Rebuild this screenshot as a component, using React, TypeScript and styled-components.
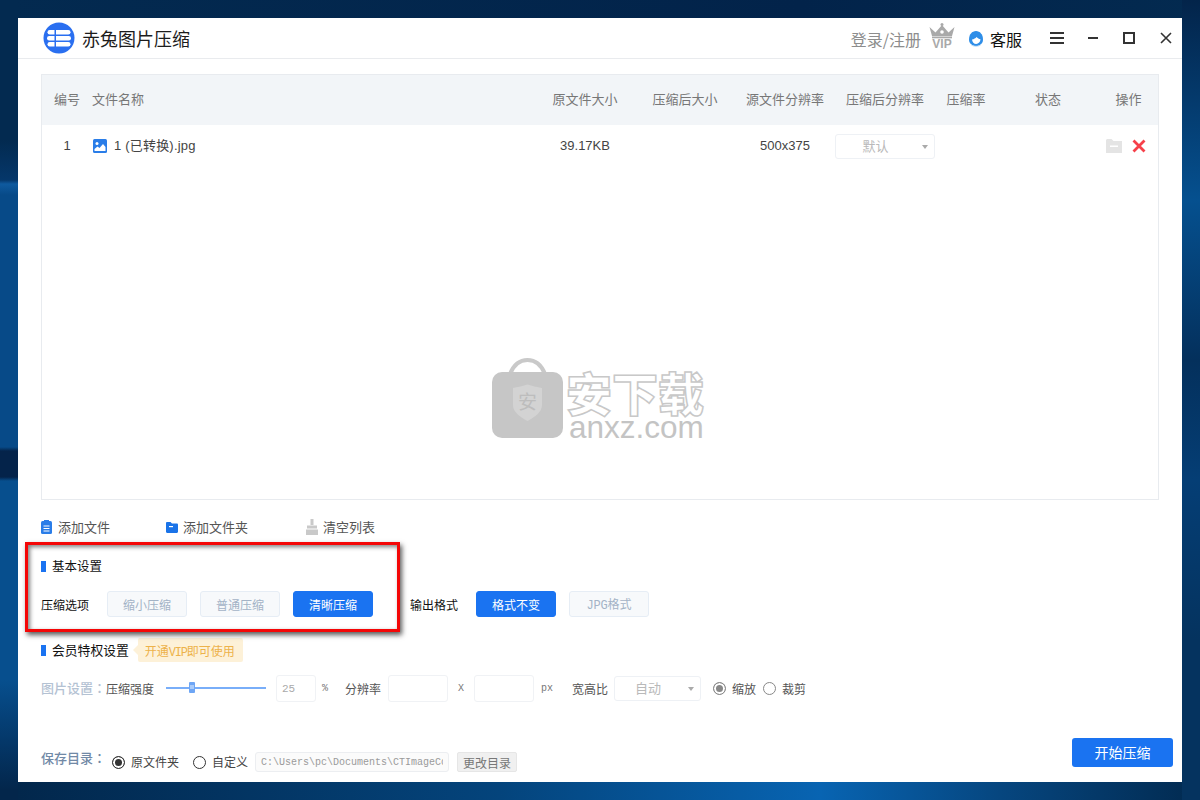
import React from 'react';
import styled, { createGlobalStyle } from 'styled-components';

const CJK = `"Noto Sans CJK SC", "Liberation Sans", sans-serif`;
const LATIN = `"Liberation Sans", "Noto Sans CJK SC", sans-serif`;
const MONO = `"Liberation Mono", "Noto Sans CJK SC", monospace`;
const BLUE = '#1a73f1';

const GlobalStyle = createGlobalStyle`
  html, body {
    margin: 0;
    height: 800px;
    overflow: hidden;
  }
  body {
    font-family: ${CJK};
    background-color: #03264b;
    background-repeat: no-repeat;
    background-size: 18px 100%, 18px 100%, 100% 18px, 100% 100%;
    background-position: left top, right top, left bottom, left top;
    background-image:
      linear-gradient(180deg, #032a50 0, #032a50 140px, #05376a 180px, #0f5a9f 184px, #074a88 195px, #074a88 447px, #04234a 451px, #04234a 477px, #074f8e 481px, #074f8e 680px, #04386a 740px, #03264b 790px),
      linear-gradient(180deg, #03244a 0, #05508f 200px, #04305c 360px, #053e75 480px, #05335f 640px, #05335f 800px),
      linear-gradient(90deg, #02264a 0, #04447c 500px, #0864b2 820px, #06467f 1000px, #022a50 1200px),
      linear-gradient(90deg, #032a50 0, #02234a 800px, #032a50 1200px);
  }
  * {
    box-sizing: border-box;
  }
`;

const Page = styled.div`
  padding: 18px;
  height: 800px;
`;

const Window = styled.div`
  position: relative;
  height: 764px;
  background: #fff;
  display: flex;
  flex-direction: column;
`;

const Header = styled.header`
  height: 41px;
  flex: none;
  display: flex;
  align-items: center;
  border-bottom: 1px solid #e9ebee;
  padding: 0 8px 0 25px;
`;

const Title = styled.h1`
  margin: 0 0 0 7px;
  font-size: 18px;
  line-height: 24px;
  font-weight: 400;
  color: #1c1c1c;
`;

const HeaderRight = styled.div`
  margin-left: auto;
  display: flex;
  align-items: center;
`;

const Login = styled.span`
  font-size: 16px;
  line-height: 22px;
  color: #8d8d8d;
  margin: 1px 8px 0 0;
`;

const Service = styled.span`
  font-size: 16px;
  line-height: 22px;
  color: #111;
  margin: 1px 27px 0 6px;
`;

const WinButton = styled.span<{ $gap: number }>`
  display: flex;
  width: 16px;
  height: 16px;
  margin-left: ${(p) => p.$gap}px;
`;

const Crown = styled.svg`
  margin-bottom: 2px;
`;

const Content = styled.main`
  flex: 1;
  padding: 15px 23px 0;
  display: flex;
  flex-direction: column;
`;

const TableBox = styled.section`
  position: relative;
  height: 426px;
  flex: none;
  border: 1px solid #e8ebef;
`;

const TableRow = styled.div<{ $head?: boolean }>`
  display: grid;
  grid-template-columns: 50px 443px 100px 100px 100px 100px 62px 102px 1fr;
  align-items: center;
  height: ${(p) => (p.$head ? 50 : 42)}px;
  padding-bottom: ${(p) => (p.$head ? 2 : 0)}px;
  background: ${(p) => (p.$head ? '#f2f5f8' : '#fff')};
  color: ${(p) => (p.$head ? '#777' : '#444')};
  font-size: 13px;
  line-height: 18px;
  font-family: ${(p) => (p.$head ? CJK : LATIN)};
`;

const Cell = styled.div<{ $left?: boolean }>`
  display: flex;
  align-items: center;
  justify-content: ${(p) => (p.$left ? 'flex-start' : 'center')};
  gap: 7px;
`;

const FileIcon = styled.svg`
  margin-left: 1px;
`;

const FileName = styled.span`
  letter-spacing: 0.2px;
`;

const SelectBox = styled.div<{ $width: number }>`
  position: relative;
  width: ${(p) => p.$width}px;
  height: 25px;
  border: 1px solid #eef1f5;
  border-radius: 3px;
  font-family: ${CJK};
  font-size: 13px;
  line-height: 21px;
  color: #b9b9b9;
  padding-right: 19px;
  text-align: center;
  flex: none;
`;

const Caret = styled.i`
  position: absolute;
  right: 6px;
  top: 10px;
  border: 3px solid transparent;
  border-top: 4px solid #aaa;
  border-bottom: 0;
`;

const RowActions = styled.div`
  display: flex;
  align-items: center;
  gap: 10px;
  margin-left: 7px;
`;

const Watermark = styled.div`
  position: absolute;
  left: 450px;
  top: 283px;
  display: flex;
  gap: 3px;
`;

const WatermarkText = styled.div`
  display: flex;
  flex-direction: column;
`;

const WatermarkCn = styled.span`
  font-size: 46px;
  line-height: 46px;
  font-weight: 900;
  margin-top: 10px;
  color: #fff;
  -webkit-text-stroke: 1.5px #c8c8c8;
`;

const WatermarkEn = styled.span`
  font-family: ${LATIN};
  font-size: 31.5px;
  line-height: 26px;
  margin-left: 3px;
  color: #c4c4c4;
`;

const Toolbar = styled.div`
  margin-top: 18px;
  height: 20px;
  display: flex;
  align-items: center;
`;

const ToolItem = styled.span<{ $width: number }>`
  width: ${(p) => p.$width}px;
  display: flex;
  align-items: center;
  font-size: 13px;
  line-height: 18px;
  margin-bottom: 2px;
  color: #555;
`;

const ToolIcon = styled.span`
  width: 17px;
  display: flex;
`;

const SectionHead = styled.div<{ $top: number }>`
  margin-top: ${(p) => p.$top}px;
  display: flex;
  align-items: center;
  font-size: 12.5px;
  line-height: 20px;
  color: #111;
`;

const BlueMark = styled.i`
  width: 5px;
  height: 11px;
  flex: none;
  background: ${BLUE};
  margin-right: 6px;
`;

const OptionRow = styled.div`
  margin-top: 15px;
  display: flex;
  align-items: center;
`;

const OptionLabel = styled.span<{ $gap?: number }>`
  font-size: 12px;
  line-height: 18px;
  color: #111;
  margin-left: ${(p) => p.$gap ?? 0}px;
  margin-right: 18px;
  padding-top: 2px;
`;

const OptionButton = styled.button<{ $active?: boolean }>`
  width: 80px;
  height: 26px;
  margin: 0 13px 0 0;
  padding: 0;
  border-radius: 3px;
  border: 1px solid ${(p) => (p.$active ? BLUE : '#e6edf5')};
  background: ${(p) => (p.$active ? BLUE : '#f7f9fb')};
  color: ${(p) => (p.$active ? '#fff' : '#a3b3c6')};
  font-family: ${CJK};
  font-size: 12px;
`;

const Latin = styled.span<{ $tight: number }>`
  font-family: ${MONO};
  font-size: 12px;
  letter-spacing: ${(p) => p.$tight}px;
`;

const VipTag = styled.span`
  position: relative;
  margin-left: 9px;
  height: 24px;
  width: 105px;
  padding-left: 7px;
  background: #fdf1d8;
  border-radius: 2px;
  color: #edb24a;
  font-size: 12px;
  line-height: 25px;
  &::before {
    content: '';
    position: absolute;
    left: -5px;
    top: 7px;
    border: 5px solid transparent;
    border-left: 0;
    border-right-color: #fdf1d8;
  }
`;

const VipHead = styled(SectionHead)`
  font-size: 12.8px;
`;

const ImageRow = styled.div`
  margin-top: 13px;
  height: 27px;
  display: flex;
  align-items: center;
  font-size: 12px;
  line-height: 18px;
  color: #555;
`;

const GroupLabel = styled.span<{ $dark?: boolean }>`
  font-family: "Noto Sans CJK JP", sans-serif;
  font-size: 13px;
  line-height: 18px;
  width: 65px;
  flex: none;
  margin-top: ${(p) => (p.$dark ? -8 : -2)}px;
  font-weight: 500;
  color: ${(p) => (p.$dark ? '#7189a6' : '#b4c2d3')};
`;

const Slider = styled.div`
  position: relative;
  width: 100px;
  height: 2px;
  margin: 0 10px 2px 12px;
  background: #79aef9;
`;

const SliderThumb = styled.i`
  position: absolute;
  left: 23px;
  top: -5px;
  width: 6px;
  height: 11px;
  border-radius: 1px;
  background: #6ea6f5;
  &::after {
    content: '';
    position: absolute;
    left: 1px;
    top: 3px;
    width: 4px;
    height: 4px;
    background: #a9cbfa;
  }
`;

const Field = styled.input<{ $width: number }>`
  width: ${(p) => p.$width}px;
  height: 27px;
  flex: none;
  border: 1px solid #f0f2f5;
  border-radius: 3px;
  background: #fff;
  padding: 0 5px;
  outline: none;
  font-family: ${MONO};
  font-size: 11px;
  color: #aaa;
`;

const Unit = styled.span<{ $left: number; $right: number }>`
  font-family: ${MONO};
  font-size: 10px;
  color: #777;
  margin: 0 ${(p) => p.$right}px 0 ${(p) => p.$left}px;
`;

const Plain = styled.span<{ $left?: number; $right?: number }>`
  margin: 0 ${(p) => p.$right ?? 0}px 0 ${(p) => p.$left ?? 0}px;
  white-space: nowrap;
`;

const Radio = styled.i<{ $on?: boolean; $color: string }>`
  width: 13px;
  height: 13px;
  flex: none;
  border-radius: 50%;
  border: 1px solid ${(p) => p.$color};
  background: ${(p) => (p.$on ? p.$color : 'transparent')};
  box-shadow: ${(p) => (p.$on ? 'inset 0 0 0 2px #fff' : 'none')};
`;

const Footer = styled.footer`
  margin: 36px -14px 0 0;
  display: flex;
  justify-content: space-between;
  align-items: flex-start;
`;

const SaveRow = styled.div`
  margin-top: 14px;
  height: 20px;
  display: flex;
  align-items: center;
  font-size: 12px;
  line-height: 18px;
  color: #444;
`;

const PathField = styled(Field)`
  height: 20px;
  border-color: #eceef1;
  background: #fbfbfb;
  font-size: 10px;
  padding: 0 5px;
  color: #9a9a9a;
`;

const ChangeButton = styled.button`
  width: 60px;
  height: 20px;
  margin-left: 8px;
  padding: 0;
  border: 1px solid #e6e6e6;
  border-radius: 2px;
  background: #f0f0f0;
  color: #777;
  font-family: ${CJK};
  font-size: 12px;
`;

const StartButton = styled.button`
  width: 101px;
  height: 29px;
  padding: 0 0 2px;
  border: 0;
  border-radius: 3px;
  background: ${BLUE};
  color: #fff;
  font-family: ${CJK};
  font-size: 14px;
`;

const Annotation = styled.div`
  position: absolute;
  left: 7px;
  top: 524px;
  width: 375px;
  height: 90px;
  border: 3px solid #f40606;
  box-shadow:
    2px 3px 5px rgba(0, 0, 0, 0.65),
    inset 2px 2px 4px rgba(0, 0, 0, 0.5);
  pointer-events: none;
`;

const Logo = () => (
  <svg width="32" height="32" viewBox="0 0 32 32">
    <circle cx="16" cy="16" r="15.5" fill="#2a6ff0" />
    <rect x="4.500" y="8" width="23" height="4.500" rx="2.200" fill="#fff" />
    <rect x="4" y="14" width="24" height="4.500" rx="2.200" fill="#fff" />
    <rect x="4.500" y="20" width="23" height="4.500" rx="2.200" fill="#fff" />
    <rect x="11.500" y="6" width="1.500" height="20" fill="#2a6ff0" />
  </svg>
);

const VipCrown = () => (
  <Crown width="26" height="28" viewBox="0 0 26 28">
    <path d="M.5 4 6.500 9.500 13 2l6.500 7.500 6-5.500-2.500 9H3z" fill="#a9a9a9" />
    <circle cx="13" cy="1.500" r="1.500" fill="#a9a9a9" />
    <circle cx="13" cy="9" r="1.800" fill="#fff" />
    <rect x="3" y="13.500" width="20" height="1.800" fill="#a9a9a9" />
    <text x="13" y="25" textAnchor="middle" fontFamily={LATIN} fontSize="12" fontWeight="700" fill="#a9a9a9">
      VIP
    </text>
  </Crown>
);

const ServiceIcon = () => (
  <svg width="16" height="17" viewBox="0 0 16 17">
    <path d="M1 9.500C1 4.500 4 1 8 1s7 3.500 7 8.500c0 4-3 6.500-7 6.500s-7-2.500-7-6.500z" fill="#2f8ee8" />
    <path d="M4 9.500c2-.3 3.500-1.200 4.500-2.500 1.200 1.200 2.500 2 4 2.300-.2 2.700-2 4.700-4.300 4.700S4.200 12 4 9.500z" fill="#fff" />
    <path d="M3 14.500C4.500 15.800 6 16.300 8 16.300s3.500-.5 5-1.800" fill="none" stroke="#bcdcf7" />
  </svg>
);

const App = () => (
  <>
    <GlobalStyle />
    <Page>
      <Window>
        <Header>
          <Logo />
          <Title>赤兔图片压缩</Title>
          <HeaderRight>
            <Login>登录/注册</Login>
            <VipCrown />
            <WinButton $gap={13}>
              <ServiceIcon />
            </WinButton>
            <Service>客服</Service>
            <WinButton $gap={0}>
              <svg width="16" height="16" viewBox="0 0 16 16" stroke="#333" strokeWidth="2">
                <path d="M1 3h14M1 8h14M1 13h14" />
              </svg>
            </WinButton>
            <WinButton $gap={20}>
              <svg width="16" height="16" viewBox="0 0 16 16" stroke="#333" strokeWidth="2">
                <path d="M3 8h10" />
              </svg>
            </WinButton>
            <WinButton $gap={20}>
              <svg width="16" height="16" viewBox="0 0 16 16" fill="none" stroke="#333" strokeWidth="2">
                <rect x="3" y="3" width="10" height="10" />
              </svg>
            </WinButton>
            <WinButton $gap={21}>
              <svg width="16" height="16" viewBox="0 0 16 16" stroke="#333" strokeWidth="1.600">
                <path d="M3 3l10 10M13 3L3 13" />
              </svg>
            </WinButton>
          </HeaderRight>
        </Header>
        <Content>
          <TableBox>
            <TableRow $head>
              <Cell>编号</Cell>
              <Cell $left>文件名称</Cell>
              <Cell>原文件大小</Cell>
              <Cell>压缩后大小</Cell>
              <Cell>源文件分辨率</Cell>
              <Cell>压缩后分辨率</Cell>
              <Cell>压缩率</Cell>
              <Cell>状态</Cell>
              <Cell>操作</Cell>
            </TableRow>
            <TableRow>
              <Cell>1</Cell>
              <Cell $left>
                <FileIcon width="14" height="14" viewBox="0 0 14 14">
                  <rect width="14" height="14" rx="1.500" fill="#2a7de8" />
                  <circle cx="4" cy="4.500" r="1.500" fill="#fff" />
                  <path d="M1.500 12v-2l3-2.500 2 1.500L10 5l2.500 3v4z" fill="#fff" />
                </FileIcon>
                <FileName>1 (已转换).jpg</FileName>
              </Cell>
              <Cell>39.17KB</Cell>
              <Cell />
              <Cell>500x375</Cell>
              <Cell>
                <SelectBox $width={100}>
                  默认
                  <Caret />
                </SelectBox>
              </Cell>
              <Cell />
              <Cell />
              <RowActions>
                <svg width="16" height="14" viewBox="0 0 16 14">
                  <path d="M0 1.500C0 .7.7 0 1.500 0h4L7.500 2H16v12H0z" fill="#e4e4e4" />
                  <rect x="4" y="6.500" width="8" height="1.500" fill="#fff" />
                </svg>
                <svg width="14" height="14" viewBox="0 0 14 14" stroke="#f6404a" strokeWidth="2.800">
                  <path d="M1.500 1.500l11 11M12.500 1.500l-11 11" />
                </svg>
              </RowActions>
            </TableRow>
            <Watermark>
              <svg width="71" height="81" viewBox="0 0 71 81">
                <path d="M18 16C22 6 28 2 35.500 2S49 6 53 16" fill="none" stroke="#c9c9c9" strokeWidth="4" />
                <rect y="14" width="71" height="66" rx="10" fill="#c6c6c6" />
                <path d="M21 30c5-1 10-2 14.500-3.500C40 28 45 29 50 30v17c0 7-7 12-14.500 16C28 59 21 54 21 47z" fill="#d3d3d3" />
                <text x="35.500" y="51" textAnchor="middle" fontFamily={CJK} fontSize="19" fill="#bdbdbd">
                  安
                </text>
              </svg>
              <WatermarkText>
                <WatermarkCn>安下载</WatermarkCn>
                <WatermarkEn>anxz.com</WatermarkEn>
              </WatermarkText>
            </Watermark>
          </TableBox>

          <Toolbar>
            <ToolItem $width={125}>
              <ToolIcon>
                <svg width="11" height="14" viewBox="0 0 11 14">
                  <rect y="1" width="11" height="13" rx="1.500" fill="#2a7de8" />
                  <rect x="3" width="5" height="3" fill="#2a7de8" />
                  <path d="M2.500 6h6M2.500 8.500h6M2.500 11h6" stroke="#fff" />
                </svg>
              </ToolIcon>
              添加文件
            </ToolItem>
            <ToolItem $width={140}>
              <ToolIcon>
                <svg width="12" height="11" viewBox="0 0 12 11">
                  <path d="M0 1.200C0 .5.500 0 1.200 0h3.300L6 1.500h4.800c.7 0 1.200.5 1.200 1.200V9.800c0 .7-.5 1.200-1.200 1.200H1.200C.5 11 0 10.500 0 9.800z" fill="#1a73e8" />
                  <rect x="3" y="4" width="4" height="1.200" fill="#fff" />
                </svg>
              </ToolIcon>
              添加文件夹
            </ToolItem>
            <ToolItem $width={80}>
              <ToolIcon>
                <svg width="12" height="16" viewBox="0 0 12 16" fill="#c9c9c9">
                  <rect x="4.500" width="3" height="6" />
                  <path d="M1 6.500h10v3H1z" />
                  <path d="M0 10.500h12V16H0z" />
                </svg>
              </ToolIcon>
              清空列表
            </ToolItem>
          </Toolbar>

          <SectionHead $top={18}>
            <BlueMark />
            基本设置
          </SectionHead>

          <OptionRow>
            <OptionLabel>压缩选项</OptionLabel>
            <OptionButton>缩小压缩</OptionButton>
            <OptionButton>普通压缩</OptionButton>
            <OptionButton $active>清晰压缩</OptionButton>
            <OptionLabel $gap={24}>输出格式</OptionLabel>
            <OptionButton $active>格式不变</OptionButton>
            <OptionButton>
              <Latin $tight={-0.2}>JPG</Latin>格式
            </OptionButton>
          </OptionRow>

          <VipHead $top={21}>
            <BlueMark />
            会员特权设置
            <VipTag>
              开通<Latin $tight={-1.2}>VIP</Latin>即可使用
            </VipTag>
          </VipHead>

          <ImageRow>
            <GroupLabel>图片设置：</GroupLabel>
            <Plain>压缩强度</Plain>
            <Slider>
              <SliderThumb />
            </Slider>
            <Field $width={40} value="25" readOnly />
            <Unit $left={6} $right={17}>%</Unit>
            <Plain $right={7}>分辨率</Plain>
            <Field $width={60} value="" readOnly />
            <Unit $left={10} $right={10}>X</Unit>
            <Field $width={60} value="" readOnly />
            <Unit $left={7} $right={19}>px</Unit>
            <Plain $right={6}>宽高比</Plain>
            <SelectBox $width={87}>
              自动
              <Caret />
            </SelectBox>
            <Plain $left={12} />
            <Radio $on $color="#888" />
            <Plain $left={6} $right={7}>缩放</Plain>
            <Radio $color="#888" />
            <Plain $left={6}>裁剪</Plain>
          </ImageRow>

          <Footer>
            <SaveRow>
              <GroupLabel $dark>保存目录：</GroupLabel>
              <Plain $left={6} />
              <Radio $on $color="#333" />
              <Plain $left={6} $right={14}>原文件夹</Plain>
              <Radio $color="#333" />
              <Plain $left={6} $right={7}>自定义</Plain>
              <PathField $width={194} value="C:\Users\pc\Documents\CTImageCompress" readOnly />
              <ChangeButton>更改目录</ChangeButton>
            </SaveRow>
            <StartButton>开始压缩</StartButton>
          </Footer>
        </Content>
        <Annotation />
      </Window>
    </Page>
  </>
);

export default App;
